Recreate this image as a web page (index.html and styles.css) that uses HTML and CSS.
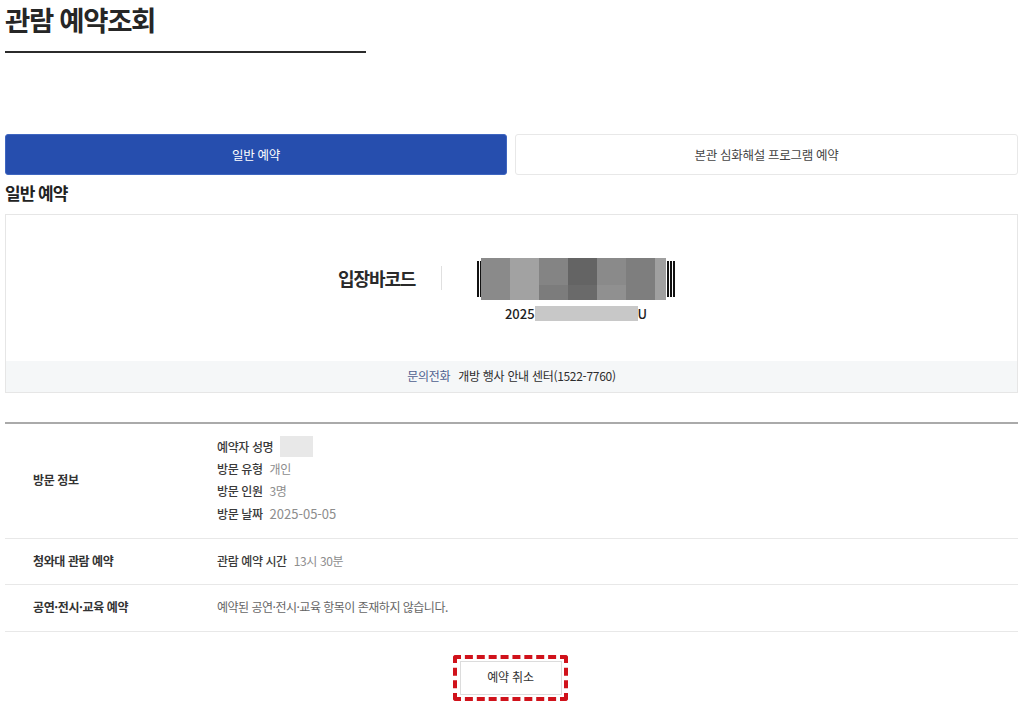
FILE: index.html
```html
<!DOCTYPE html>
<html lang="ko">
<head>
    <meta charset="UTF-8">
    <title>관람 예약조회</title>
    <link rel="stylesheet" href="styles.css">
</head>
<body>
    <div class="page">
        <div class="title-wrap">
            <h1>관람 예약조회</h1>
        </div>

        <div class="tabs">
            <a class="tab active">일반 예약</a>
            <a class="tab">본관 심화해설 프로그램 예약</a>
        </div>

        <h2>일반 예약</h2>

        <div class="ticket">
            <div class="ticket-body">
                <div class="barcode-label">입장바코드</div>
                <div class="barcode-area">
                    <div class="barcode">
                        <div class="bars-left"><i></i><i></i></div>
                        <div class="mosaic">
                            <span class="m1"></span><span class="m2"></span><span class="m3"></span><span class="m4"></span><span class="m5"></span><span class="m6"></span><span class="m7"></span>
                        </div>
                        <div class="bars-right"><i></i><i></i><i></i></div>
                    </div>
                    <div class="barcode-no">2025<span class="mask"></span>U</div>
                </div>
            </div>
            <div class="ticket-foot">
                <span class="foot-label">문의전화</span>
                <span>개방 행사 안내 센터(1522-7760)</span>
            </div>
        </div>

        <div class="info-table">
            <div class="info-row row-visit">
                <div class="info-head">방문 정보</div>
                <div class="info-cell">
                    <div class="line"><b>예약자 성명</b><span class="name-mask"></span></div>
                    <div class="line"><b>방문 유형</b><span>개인</span></div>
                    <div class="line"><b>방문 인원</b><span>3명</span></div>
                    <div class="line"><b>방문 날짜</b><span class="date">2025-05-05</span></div>
                </div>
            </div>
            <div class="info-row">
                <div class="info-head">청와대 관람 예약</div>
                <div class="info-cell">
                    <div class="line"><b>관람 예약 시간</b><span>13시 30분</span></div>
                </div>
            </div>
            <div class="info-row">
                <div class="info-head">공연·전시·교육 예약</div>
                <div class="info-cell">
                    <div class="line"><span>예약된 공연·전시·교육 항목이 존재하지 않습니다.</span></div>
                </div>
            </div>
        </div>

        <div class="actions">
            <div class="highlight">
                <button type="button">예약 취소</button>
            </div>
        </div>
    </div>
</body>
</html>
```

FILE: styles.css
```css
html, body {
    margin: 0;
    padding: 0;
    background: #fff;
}
body {
    font-family: "Noto Sans CJK KR", "Liberation Sans", sans-serif;
    color: #222;
    font-size: 12px;
    letter-spacing: -0.4px;
}
.page {
    padding: 0 6px 0 5px;
    height: 707px;
    overflow: hidden;
    box-sizing: border-box;
}
.title-wrap {
    width: 361px;
    height: 51px;
    border-bottom: 2px solid #2b2b2b;
}
h1 {
    margin: 0;
    font-size: 27.5px;
    line-height: 39px;
    font-weight: 700;
    letter-spacing: -1.35px;
    color: #262626;
}
.tabs {
    display: flex;
    gap: 8px;
    margin-top: 81px;
}
.tab {
    flex: 1;
    height: 41px;
    box-sizing: border-box;
    display: flex;
    align-items: center;
    justify-content: center;
    border: 1px solid #e8e8e8;
    border-radius: 3px;
    font-size: 12.5px;
    letter-spacing: -0.3px;
    color: #444;
}
.tab.active {
    flex: 0 0 502px;
    background: #264eae;
    border-color: #3f66c0;
    color: #fff;
}
h2 {
    margin: 7px 0 10px;
    font-size: 17px;
    line-height: 22px;
    font-weight: 700;
    letter-spacing: -1px;
    color: #222;
}
.ticket {
    height: 179px;
    box-sizing: border-box;
    border: 1px solid #e6e6e6;
    display: flex;
    flex-direction: column;
}
.ticket-body {
    flex: 1;
    display: flex;
    justify-content: center;
    padding-top: 43px;
    padding-right: 10px;
}
.barcode-label {
    width: 103px;
    height: 24px;
    line-height: 24px;
    margin-top: 8px;
    border-right: 1px solid #e0e0e0;
    font-size: 18px;
    font-weight: 700;
    letter-spacing: -1.1px;
    color: #2a2a2a;
}
.barcode-area {
    margin-left: 35px;
    width: 198px;
}
.barcode {
    position: relative;
    height: 42px;
    display: flex;
    justify-content: space-between;
    align-items: center;
}
.bars-left, .bars-right {
    display: flex;
    gap: 1px;
    height: 36px;
}
.bars-left i, .bars-right i {
    display: block;
    width: 2px;
    background: #111;
}
.bars-left i + i {
    width: 1px;
}
.mosaic {
    position: absolute;
    left: 4px;
    top: 0;
    width: 185px;
    height: 42px;
    display: flex;
    border-radius: 1px;
}
.mosaic span {
    flex: 1;
}
.m1 { background: #8a8a8a; }
.m2 { background: #a2a2a2; }
.m3 { background: linear-gradient(#848484 65%, #7c7c7c 65%); }
.m4 { background: linear-gradient(#646464 65%, #6a6a6a 65%); }
.m5 { background: linear-gradient(#8a8a8a 65%, #909090 65%); }
.m6 { background: #7e7e7e; }
.mosaic .m7 { background: #a0a0a0; flex: 0 0 11px; }
.barcode-no {
    margin-top: 5px;
    display: flex;
    justify-content: center;
    align-items: center;
    height: 16px;
    font-size: 13px;
    font-weight: 500;
    letter-spacing: 0;
    color: #222;
}
.mask {
    width: 103px;
    height: 15px;
    background: #c8c8c8;
}
.ticket-foot {
    height: 31px;
    box-sizing: border-box;
    padding-bottom: 2px;
    background: #f5f7f8;
    display: flex;
    align-items: center;
    justify-content: center;
    gap: 8px;
    letter-spacing: -0.3px;
    color: #2d2d2d;
}
.foot-label {
    color: #4f5f8f;
}
.info-table {
    margin-top: 29px;
    border-top: 2px solid #aaa;
}
.info-row {
    display: flex;
    align-items: center;
    height: 46.5px;
    box-sizing: border-box;
    padding-bottom: 2px;
    border-bottom: 1px solid #e8e8e8;
}
.row-visit {
    height: 114.5px;
}
.info-head {
    width: 212px;
    padding-left: 28px;
    box-sizing: border-box;
    font-weight: 700;
    color: #333;
}
.info-cell {
    display: flex;
    flex-direction: column;
    gap: 4.6px;
    color: #8d8d8d;
}
.line {
    display: flex;
    align-items: center;
    gap: 7px;
    height: 17.7px;
}
.line b {
    font-weight: 500;
    color: #3a3a3a;
}
.line .date {
    font-size: 13px;
    letter-spacing: 0;
}
.info-row:last-child .line span {
    letter-spacing: -0.5px;
    color: #666;
}
.name-mask {
    width: 33px;
    height: 21px;
    background: #e8e8e8;
}
.actions {
    display: flex;
    justify-content: center;
    margin-top: 23px;
    padding-right: 2px;
}
.highlight {
    width: 115px;
    height: 46px;
    box-sizing: border-box;
    border: 4px dashed #d0121b;
    border-radius: 3px;
    display: flex;
    align-items: center;
    justify-content: center;
}
button {
    width: 102px;
    height: 34px;
    padding: 0 0 2px;
    background: #fff;
    border: 1px solid #dcdcdc;
    font-family: inherit;
    font-size: 12px;
    letter-spacing: -0.2px;
    color: #333;
}
```
